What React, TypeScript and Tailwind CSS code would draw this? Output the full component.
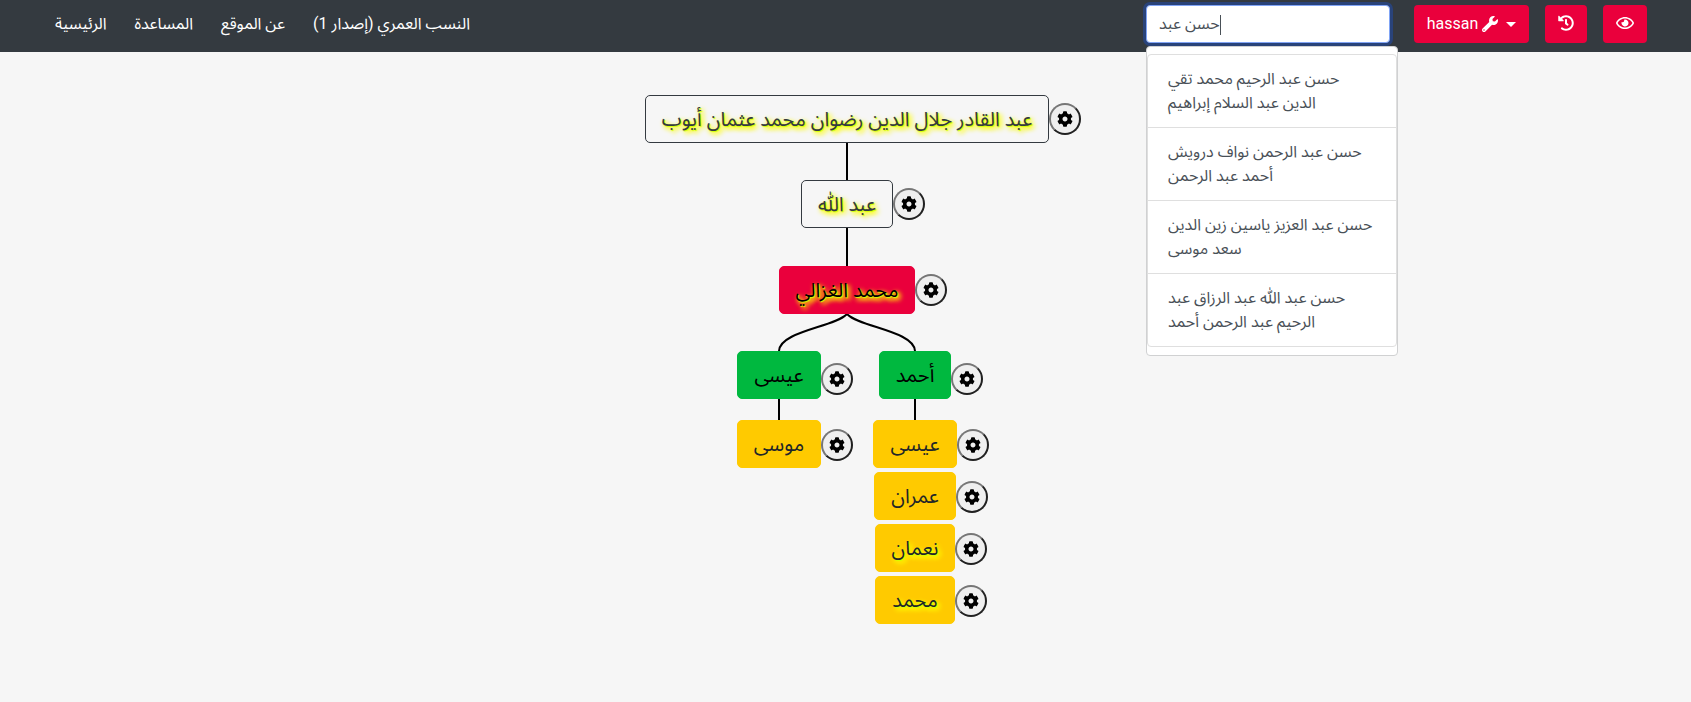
import { FaCog, FaHistory, FaRegEye, FaWrench } from "react-icons/fa";

const navLinks = ["الرئيسية", "المساعدة", "عن الموقع", "النسب العمري (إصدار 1)"];

const suggestions = [
  "حسن عبد الرحيم محمد تقي الدين عبد السلام إبراهيم",
  "حسن عبد الرحمن نواف درويش أحمد عبد الرحمن",
  "حسن عبد العزيز ياسين زين الدين سعد موسى",
  "حسن عبد اللّٰه عبد الرزاق عبد الرحيم عبد الرحمن أحمد",
];

type Tone = "ancestor" | "current" | "child" | "grandchild";

const tones: Record<Tone, string> = {
  ancestor: "border-[#343a40] text-[#343a40]",
  current: "border-[#ea003c] bg-[#ea003c] text-black",
  child: "border-[#00b83f] bg-[#00b83f] text-black",
  grandchild: "border-[#ffca00] bg-[#ffca00] text-[#212529]",
};

const gearShift: Record<Tone, string> = {
  ancestor: "",
  current: "",
  child: "mt-2",
  grandchild: "mt-0.5",
};

function Person({ name, tone, glow = false }: { name: string; tone: Tone; glow?: boolean }) {
  return (
    <div className="flex items-center justify-center">
      <button
        type="button"
        dir="rtl"
        className={`h-12 shrink-0 whitespace-nowrap rounded-[5px] border px-4 text-xl leading-[30px] ${tones[tone]} ${
          glow ? "[text-shadow:1px_1px_1px_#d4ff00,2px_2px_5px_#ffff00,3px_3px_5px_#ffff00]" : ""
        }`}
      >
        {name}
      </button>
      <button
        type="button"
        aria-label={`خيارات ${name}`}
        className={`-mr-8 flex size-8 shrink-0 items-center justify-center rounded-full border-2 border-t-[#767676] border-r-[#212121] border-b-[#212121] border-l-[#767676] bg-[#efefef] text-base text-black ${gearShift[tone]}`}
      >
        <FaCog />
      </button>
    </div>
  );
}

function Stem({ className }: { className: string }) {
  return <div className={`mx-auto w-0.5 bg-black ${className}`} />;
}

const redButton =
  "flex h-[38px] items-center justify-center rounded bg-[#ea003c] text-base text-white";

export default function App() {
  return (
    <div className="min-h-screen bg-[#f6f6f6] font-[Roboto,'Noto_Sans_Arabic','Noto_Sans',sans-serif] text-base text-[#212529]">
      <header className="flex h-[52px] items-start justify-between bg-[#343a40] pr-11 pl-[55px]">
        <nav className="flex gap-7 pt-3">
          {navLinks.map((label) => (
            <a key={label} href="#" dir="rtl" className="whitespace-nowrap leading-6 text-white">
              {label}
            </a>
          ))}
        </nav>
        <div className="flex items-center gap-4 pt-[5px]">
          <div className="relative mr-2">
            <input
              type="text"
              aria-label="بحث"
              defaultValue="حسن عبد"
              className="block h-[38px] w-[244px] rounded border border-[#80a4f5] bg-white px-3 text-base text-[#495057] ring-3 ring-[#29437a] outline-none"
            />
            <span className="absolute top-2.5 left-[74px] h-5 w-px bg-[#495057]" />
            <div className="absolute top-[41px] left-0 z-10 w-[252px] rounded border border-[#d0d1d2] bg-white pt-[7px] pb-2">
              <ul className="divide-y divide-[#dfdfdf] rounded border border-[#dfdfdf]">
                {suggestions.map((name) => (
                  <li key={name} className="px-5 py-3 leading-6 text-[#495057]">
                    {name}
                  </li>
                ))}
              </ul>
            </div>
          </div>
          <button type="button" className={`${redButton} w-[115px] gap-1`}>
            hassan <FaWrench />
            <span className="ml-1 border-x-[5px] border-t-[5px] border-x-transparent border-t-white" />
          </button>
          <button type="button" aria-label="السجل" className={`${redButton} w-[42px] pb-0.5`}>
            <FaHistory />
          </button>
          <button type="button" aria-label="عرض" className={`${redButton} w-11 pb-0.5`}>
            <FaRegEye className="text-lg" />
          </button>
        </div>
      </header>

      <main className="pt-[43px] pb-10 pl-[3px]">
        <Person name="عبد القادر جلال الدين رضوان محمد عثمان أيوب" tone="ancestor" glow />
        <Stem className="h-[37px]" />
        <Person name="عبد اللّٰه" tone="ancestor" glow />
        <Stem className="h-[38px]" />
        <Person name="محمد الغزالي" tone="current" glow />
        <svg className="mx-auto block" width="140" height="37" viewBox="0 0 140 37" fill="none" stroke="black" strokeWidth="2">
          <path d="M70 0C58 13 3 17 2 37" />
          <path d="M70 0C82 13 137 17 138 37" />
        </svg>
        <div className="flex justify-center">
          <section className="w-[136px]">
            <Person name="عيسى" tone="child" />
            <Stem className="h-[21px]" />
            <Person name="موسى" tone="grandchild" />
          </section>
          <section className="w-[136px]">
            <Person name="أحمد" tone="child" />
            <Stem className="h-[21px]" />
            <div className="flex flex-col gap-1">
              <Person name="عيسى" tone="grandchild" />
              <Person name="عمران" tone="grandchild" />
              <Person name="نعمان" tone="grandchild" glow />
              <Person name="محمد" tone="grandchild" glow />
            </div>
          </section>
        </div>
      </main>
    </div>
  );
}
